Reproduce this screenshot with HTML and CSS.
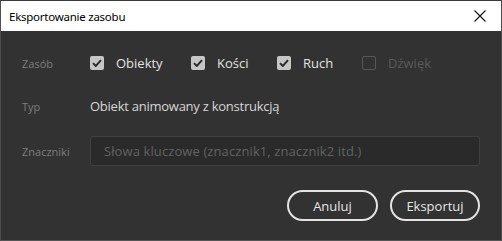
FILE: index.html
```html
<!DOCTYPE html>
<html lang="pl">
<head>
<meta charset="utf-8">
<title>Eksportowanie zasobu</title>
<link rel="stylesheet" href="styles.css">
</head>
<body>
<div class="window">
  <div class="titlebar">
    <span class="title">Eksportowanie zasobu</span>
    <svg class="close" width="12" height="12" viewBox="0 0 12 12"><path d="M0.5 0.5 L11.5 11.5 M11.5 0.5 L0.5 11.5" stroke="#111" stroke-width="1.1" fill="none"/></svg>
  </div>
  <div class="content">
    <div class="row row-asset">
      <span class="label">Zasób</span>
      <div class="checks">
        <label class="check"><span class="box on"><svg width="10" height="8" viewBox="0 0 10 8"><path d="M1 4.2 L3.8 7 L9 1.2" stroke="#2a2a2a" stroke-width="1.9" fill="none"/></svg></span><span class="ctext">Obiekty</span></label>
        <label class="check"><span class="box on"><svg width="10" height="8" viewBox="0 0 10 8"><path d="M1 4.2 L3.8 7 L9 1.2" stroke="#2a2a2a" stroke-width="1.9" fill="none"/></svg></span><span class="ctext">Kości</span></label>
        <label class="check"><span class="box on"><svg width="10" height="8" viewBox="0 0 10 8"><path d="M1 4.2 L3.8 7 L9 1.2" stroke="#2a2a2a" stroke-width="1.9" fill="none"/></svg></span><span class="ctext">Ruch</span></label>
        <label class="check disabled"><span class="box off"></span><span class="ctext">Dźwięk</span></label>
      </div>
    </div>
    <div class="row row-type">
      <span class="label">Typ</span>
      <span class="value">Obiekt animowany z konstrukcją</span>
    </div>
    <div class="row row-tags">
      <span class="label">Znaczniki</span>
      <div class="input"><span class="placeholder">Słowa kluczowe (znacznik1, znacznik2 itd.)</span></div>
    </div>
    <div class="buttons">
      <button class="btn">Anuluj</button>
      <button class="btn">Eksportuj</button>
    </div>
  </div>
</div>
</body>
</html>
```
FILE: styles.css
```css
* { box-sizing: border-box; }
html, body { margin: 0; padding: 0; background: #323232; }
.window {
  width: 502px;
  height: 241px;
  background: #323232;
  border-left: 1px solid #4e4e4e;
  border-right: 1px solid #4e4e4e;
  border-bottom: 1px solid #555555;
  border-top: 1px solid #3a3a3a;
  display: flex;
  flex-direction: column;
  font-family: "Open Sans", "Noto Sans", sans-serif;
}
.titlebar {
  height: 30px;
  background: #ffffff;
  display: flex;
  align-items: center;
  justify-content: space-between;
  padding: 0 15px 0 8px;
  flex-shrink: 0;
}
.title {
  font-family: "Noto Sans", "Open Sans", sans-serif;
  font-size: 11.5px;
  color: #000;
  letter-spacing: -0.25px;
}
.close { display: block; }
.content {
  flex: 1;
  padding: 18px 21px 0 21px;
  display: flex;
  flex-direction: column;
}
.row {
  display: flex;
  align-items: center;
  height: 28px;
}
.label {
  width: 68px;
  flex-shrink: 0;
  font-size: 11px;
  color: #7e7e7e;
}
.checks {
  display: grid;
  grid-template-columns: 101px 86px 85px auto;
  align-items: center;
}
.check {
  display: flex;
  align-items: center;
  gap: 12px;
  font-size: 13px;
  color: #e2e2e2;
}
.check.disabled { color: #5a5a5a; }
.box {
  width: 14px;
  height: 14px;
  border-radius: 2px;
  display: flex;
  align-items: center;
  justify-content: center;
}
.box.on { background: #c6c6c6; }
.box.off { border: 1.5px solid #565656; }
.row-type { margin-top: 15px; }
.value {
  font-size: 13px;
  color: #d6d6d6;
  letter-spacing: -0.25px;
}
.row-tags { margin-top: 16px; height: 30px; }
.input {
  flex: 1;
  height: 30px;
  background: #2a2a2a;
  border: 1px solid #404040;
  border-radius: 3px;
  display: flex;
  align-items: center;
  padding-left: 13px;
}
.placeholder {
  font-size: 13px;
  color: #626262;
  letter-spacing: 0.1px;
}
.buttons {
  margin-top: 24px;
  display: flex;
  justify-content: flex-end;
  gap: 12px;
}
.btn {
  height: 31px;
  width: 91px;
  border: 2px solid #e4e4e4;
  border-radius: 16px;
  background: transparent;
  color: #e6e6e6;
  font-family: "Open Sans", "Noto Sans", sans-serif;
  font-size: 13px;
  padding: 0;
}
.btn + .btn { width: 90px; }
```
